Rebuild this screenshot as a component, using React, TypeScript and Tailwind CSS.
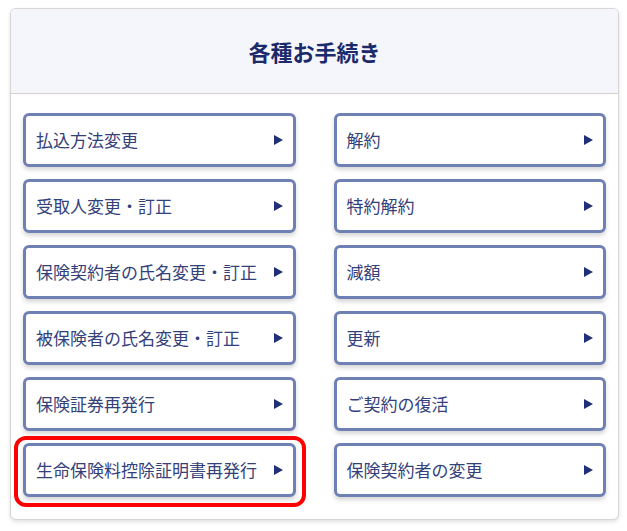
import { Fragment } from "react";

const procedures = [
  ["払込方法変更", "解約"],
  ["受取人変更・訂正", "特約解約"],
  ["保険契約者の氏名変更・訂正", "減額"],
  ["被保険者の氏名変更・訂正", "更新"],
  ["保険証券再発行", "ご契約の復活"],
  ["生命保険料控除証明書再発行", "保険契約者の変更"],
];

function ProcButton({ label, highlight }: { label: string; highlight?: boolean }) {
  return (
    <div className="relative">
      {highlight && (
        <span className="pointer-events-none absolute -top-[7px] -bottom-[10px] -left-[9px] -right-[10px] rounded-[12px] border-[4px] border-[#ff0000]" />
      )}
      <button className="flex h-[54px] w-full items-center justify-between rounded-[6px] border-[3px] border-[#6e80b4] bg-white pl-[10px] pr-[10px] text-left shadow-[0_3px_4px_rgba(0,0,0,0.16)]">
        <span className="text-[17px] text-[#33407a]">{label}</span>
        <svg width="9" height="10" viewBox="0 0 9 10" className="shrink-0">
          <path d="M0 0 L9 5 L0 10 Z" fill="#1f2f78" />
        </svg>
      </button>
    </div>
  );
}

export default function App() {
  return (
    <div
      className="min-h-[531px] w-[627px] bg-white pt-[8px] pl-[10px]"
      style={{ fontFamily: '"Noto Sans CJK JP", "Noto Sans", sans-serif' }}
    >
      <div className="w-[609px] overflow-hidden rounded-[6px] border border-[#d9d4d4] bg-white shadow-[0_2px_4px_rgba(0,0,0,0.12)]">
        <div className="flex h-[85px] items-center justify-center border-b border-[#d6d0d0] bg-[#f4f6fb]">
          <h2 className="text-[22px] font-bold text-[#1b2a6b]">各種お手続き</h2>
        </div>
        <div className="grid grid-cols-2 gap-x-[38px] gap-y-[12px] px-[12px] pt-[19px] pb-[22px]">
          {procedures.map(([left, right], i) => (
            <Fragment key={left}>
              <ProcButton label={left} highlight={i === procedures.length - 1} />
              <ProcButton label={right} />
            </Fragment>
          ))}
        </div>
      </div>
    </div>
  );
}
